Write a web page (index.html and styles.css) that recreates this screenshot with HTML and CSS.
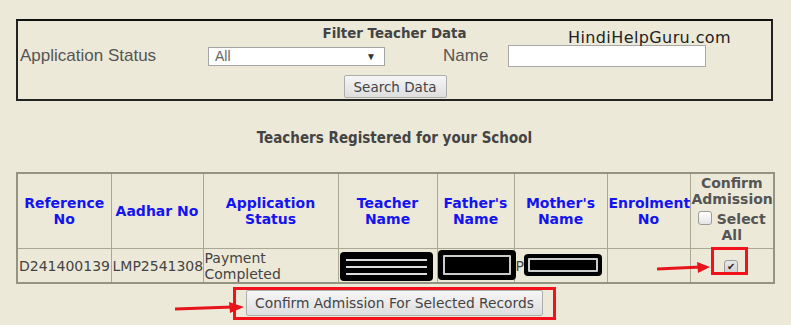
FILE: index.html
```html
<!DOCTYPE html>
<html lang="en">
<head>
  <meta charset="UTF-8">
  <title>Teachers Registered</title>
  <link rel="stylesheet" href="styles.css">
</head>
<body>

<div class="page">
  <div class="filter-box">
    <div class="filter-title">Filter Teacher Data</div>
    <div class="filter-row">
      <span class="filter-label">Application Status</span>
      <span class="fake-select">All<span class="caret">&#9660;</span></span>
      <span class="filter-label name-label">Name</span>
      <span class="fake-input"></span>
    </div>
    <div class="filter-actions">
      <button class="btn search-btn">Search Data</button>
    </div>
    <span class="watermark">HindiHelpGuru.com</span>
  </div>

  <h2 class="section-title">Teachers Registered for your School</h2>

  <div class="table-wrap">
    <table class="teachers">
      <colgroup>
        <col style="width:94px"><col style="width:92px"><col style="width:135px">
        <col style="width:99px"><col style="width:77px"><col style="width:93px">
        <col style="width:83px"><col style="width:84px">
      </colgroup>
      <tr class="head">
        <th>Reference No</th>
        <th>Aadhar No</th>
        <th>Application Status</th>
        <th>Teacher Name</th>
        <th>Father's Name</th>
        <th>Mother's Name</th>
        <th>Enrolment No</th>
        <th class="confirm-head">Confirm Admission<br><span class="check"></span> Select All</th>
      </tr>
      <tr class="row">
        <td>D241400139</td>
        <td>LMP2541308</td>
        <td class="status">Payment<br>Completed</td>
        <td></td>
        <td></td>
        <td>P</td>
        <td></td>
        <td class="center"><span class="check checked">&#10004;</span></td>
      </tr>
    </table>

    <!-- redacted personal data -->
    <div class="redact r-teacher"><i></i><i></i><i></i></div>
    <div class="redact r-father"><b></b></div>
    <div class="redact r-mother"><b></b></div>

    <div class="highlight hl-check"></div>
    <svg class="arrow arrow-check" width="56" height="12" viewBox="0 0 56 12">
      <path d="M0 7 L44 5" stroke="#e8141b" stroke-width="3"/>
      <path d="M40 0 L53 5 L41 11 Z" fill="#e8141b"/>
    </svg>
  </div>

  <div class="confirm-wrap">
    <div class="highlight-btn">
      <button class="btn confirm-btn">Confirm Admission For Selected Records</button>
    </div>
    <svg class="arrow arrow-btn" width="70" height="12" viewBox="0 0 70 12">
      <path d="M0 8 L58 6" stroke="#e8141b" stroke-width="3"/>
      <path d="M54 1 L69 6 L55 12 Z" fill="#e8141b"/>
    </svg>
  </div>
</div>

</body>
</html>
```

FILE: styles.css
```css
body {
  margin: 0;
  background-color: #ece9d8;
  font-family: "DejaVu Sans", Verdana, sans-serif;
  color: #444;
}

.page {
  width: 757px;
  padding: 19px 16px 0;
  position: relative;
}

/* filter panel */
.filter-box {
  position: relative;
  height: 78px;
  border: 2px solid #222;
  border-top-color: #111;
}

.filter-title {
  text-align: center;
  font-weight: bold;
  font-size: 13.4px;
  color: #444;
  padding-top: 5px;
  height: 18px;
}

.filter-row {
  display: flex;
  align-items: center;
  height: 24px;
  padding-left: 2px;
}

.filter-label {
  font-family: "Liberation Sans", Arial, sans-serif;
  font-size: 17px;
  color: #555;
  width: 188px;
}

.name-label {
  width: auto;
  margin-left: 58px;
  margin-right: 20px;
}

.fake-select {
  display: flex;
  justify-content: space-between;
  align-items: center;
  box-sizing: border-box;
  width: 177px;
  height: 19px;
  padding: 0 8px 0 6px;
  background: #fff;
  border: 1px solid #a5a5a5;
  font-family: "Liberation Sans", Arial, sans-serif;
  font-size: 14px;
  color: #666;
}

.caret {
  font-size: 10px;
  color: #333;
}

.fake-input {
  box-sizing: border-box;
  width: 198px;
  height: 22px;
  background: #fff;
  border: 1px solid #a9a9a9;
}

.filter-actions {
  display: flex;
  justify-content: center;
  padding-top: 7px;
  padding-left: 1px;
}

.btn {
  font-family: "DejaVu Sans", Verdana, sans-serif;
  color: #444;
  background: linear-gradient(#f6f6f6, #dedede);
  border: 1px solid #adadad;
  border-radius: 2px;
  padding: 0;
}

.search-btn {
  width: 103px;
  height: 23px;
  font-size: 13.5px;
}

.watermark {
  position: absolute;
  left: 550px;
  top: 7px;
  font-size: 16px;
  color: #222;
  letter-spacing: 0.4px;
}

/* list title */
.section-title {
  margin: 0;
  padding: 28px 0 0;
  height: 43px;
  text-align: center;
  font-family: "DejaVu Sans Condensed", "DejaVu Sans", sans-serif;
  font-weight: bold;
  font-size: 15px;
  color: #444;
}

/* teachers table */
.table-wrap {
  position: relative;
}

.teachers {
  width: 757px;
  border-collapse: collapse;
  table-layout: fixed;
  border: 2px solid #949482;
}

.teachers th,
.teachers td {
  border: 1px solid #a8a895;
  padding: 0 1px;
}

.teachers th {
  height: 73px;
  color: #1414f0;
  font-size: 14px;
  line-height: 16px;
  font-weight: bold;
}

.teachers th.confirm-head {
  color: #555;
  vertical-align: top;
  padding-top: 1px;
}

.teachers td {
  height: 33px;
  font-size: 14px;
  color: #444;
  white-space: nowrap;
}

.teachers td.status {
  line-height: 16px;
  vertical-align: bottom;
}

.center {
  text-align: center;
}

.check {
  display: inline-block;
  box-sizing: border-box;
  width: 14px;
  height: 14px;
  border: 1px solid #9c9c9c;
  border-radius: 3px;
  background: linear-gradient(#fff, #e4e4e4);
  vertical-align: -1px;
  margin-top: 4px;
}

.check.checked {
  display: inline-flex;
  align-items: center;
  justify-content: center;
  font-size: 10px;
  line-height: 1;
  color: #222;
  background: linear-gradient(#e8e8e8, #cfcfcf);
  margin: 0 1px 0 0;
  vertical-align: middle;
}

.redact {
  position: absolute;
  background: #000;
  border-radius: 4px;
}

.r-teacher {
  left: 324px;
  top: 80px;
  width: 93px;
  height: 29px;
  display: flex;
  flex-direction: column;
  justify-content: center;
  gap: 5px;
  padding: 0 6px;
  box-sizing: border-box;
}

.r-teacher i {
  display: block;
  height: 2px;
  background: #ddd;
}

.r-father {
  left: 422px;
  top: 78px;
  width: 78px;
  height: 30px;
  padding: 5px;
  box-sizing: border-box;
}

.r-mother {
  left: 508px;
  top: 82px;
  width: 78px;
  height: 22px;
  padding: 4px 4px;
  box-sizing: border-box;
}

.redact b {
  display: block;
  height: 100%;
  box-sizing: border-box;
  border: 2px solid #ccc;
  border-radius: 1px;
}

.highlight {
  position: absolute;
  border: 3px solid #f2121b;
}

.hl-check {
  left: 695px;
  top: 75px;
  width: 31px;
  height: 22px;
}

.arrow {
  position: absolute;
}

.arrow-check {
  left: 641px;
  top: 90px;
}

/* confirm button */
.confirm-wrap {
  position: relative;
  display: flex;
  justify-content: center;
  padding-top: 3px;
}

.highlight-btn {
  border: 3px solid #f2121b;
  padding: 0 10px 1px 10px;
}

.confirm-btn {
  width: 297px;
  height: 26px;
  font-size: 13.8px;
}

.arrow-btn {
  left: 159px;
  top: 17px;
}
```
